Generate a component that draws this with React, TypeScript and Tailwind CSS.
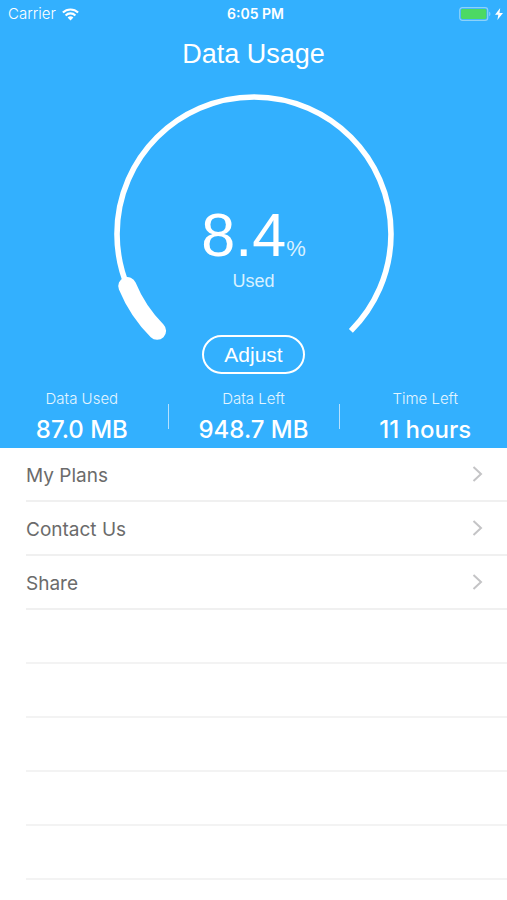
import React from "react";

const CENTER = 140;
const RADIUS = 137;
const START_ANGLE = 135;
const SWEEP = 270;

function pointAt(angle: number) {
  const rad = (angle * Math.PI) / 180;
  return `${CENTER + RADIUS * Math.cos(rad)} ${CENTER + RADIUS * Math.sin(rad)}`;
}

function arc(sweep: number) {
  const large = sweep > 180 ? 1 : 0;
  return `M ${pointAt(START_ANGLE)} A ${RADIUS} ${RADIUS} 0 ${large} 1 ${pointAt(START_ANGLE + sweep)}`;
}

function StatusBar() {
  return (
    <div className="grid h-7 grid-cols-3 items-center pr-1 pl-2 text-sm leading-5">
      <div className="flex items-center gap-1.5">
        <span className="text-[15px] font-light">Carrier</span>
        <svg width="17" height="13" viewBox="0 0 17 13" fill="none" stroke="currentColor" strokeWidth="2.1" aria-hidden="true">
          <path d="M0.9 4.6C5.1 0.4 11.9 0.4 16.1 4.6" />
          <path d="M3.6 7.4C6.4 4.7 10.6 4.7 13.4 7.4" />
          <path d="M8.5 12.4L5.6 9.5C7.2 7.9 9.8 7.9 11.4 9.5Z" fill="currentColor" stroke="none" />
        </svg>
      </div>
      <span className="text-center font-semibold">6:05 PM</span>
      <div className="flex items-center justify-end gap-1">
        <svg width="32" height="14" viewBox="0 0 32 14" aria-hidden="true">
          <rect x="0.7" y="0.7" width="28" height="12.6" rx="2.6" fill="none" stroke="#8cd2fa" strokeWidth="1.2" />
          <rect x="2" y="2" width="25.4" height="10" rx="1.4" fill="#4cd964" />
          <path d="M30.2 4.8C31.8 5.4 31.8 8.6 30.2 9.2Z" fill="#8cd2fa" />
        </svg>
        <svg width="8" height="12" viewBox="0 0 8 12" fill="currentColor" aria-hidden="true">
          <path d="M5.2 0L0 6.8H3.3L2.4 12L8 4.9H4.5Z" />
        </svg>
      </div>
    </div>
  );
}

function Gauge({ percent }: { percent: number }) {
  return (
    <div className="mx-auto grid w-[280px]">
      <svg className="col-start-1 row-start-1" width="280" height="280" viewBox="0 0 280 280" fill="none" stroke="white" aria-hidden="true">
        <path d={arc(SWEEP)} strokeWidth="5.6" />
        <path d={arc((SWEEP * percent) / 100)} strokeWidth="18" strokeLinecap="round" />
      </svg>
      <div className="col-start-1 row-start-1 flex flex-col items-center justify-end font-['Liberation_Sans',Arial,sans-serif]">
        <div className="flex items-baseline leading-10">
          <span className="text-[61px]">{percent}</span>
          <span className="text-[22px] text-[#d9f1ff]">%</span>
        </div>
        <div className="text-lg leading-6 text-[#d9f1ff]">Used</div>
        <button type="button" className="mt-[42px] h-[39px] w-[103px] rounded-full border-2 border-white text-[21px] leading-6">
          Adjust
        </button>
      </div>
    </div>
  );
}

const stats = [
  { label: "Data Used", value: "87.0 MB" },
  { label: "Data Left", value: "948.7 MB" },
  { label: "Time Left", value: "11 hours" },
];

function Stats() {
  return (
    <dl className="-mx-1 mt-[13px] grid grid-cols-3">
      {stats.map((stat, i) => (
        <div key={stat.label} className="relative text-center">
          <dt className="text-[15px] leading-6 font-light text-[#e3f5ff]">{stat.label}</dt>
          <dd className="mt-[3px] text-2xl leading-8 font-medium">{stat.value}</dd>
          {i > 0 && <span className="absolute top-[17px] left-0 h-[25px] w-px bg-[#b5e1ff]" />}
        </div>
      ))}
    </dl>
  );
}

const links = ["My Plans", "Contact Us", "Share"];
const emptyRows = [0, 1, 2, 3, 4];

export default function App() {
  return (
    <div className="h-screen overflow-hidden bg-white font-['Inter','Noto_Sans',sans-serif]">
      <header className="overflow-hidden bg-[#33b0fe] pb-0.5 text-white">
        <StatusBar />
        <h1 className="mt-2 mb-[22px] text-center font-['Liberation_Sans',Arial,sans-serif] text-[27px] leading-9">
          Data Usage
        </h1>
        <Gauge percent={8.4} />
        <Stats />
      </header>
      <nav>
        <ul className="pl-[26px]">
          {links.map((link) => (
            <li key={link} className="h-[54px] border-b-2 border-[#f0f0f0]">
              <a href="#" className="flex h-full items-center justify-between pr-6 text-[19px] leading-6 text-[#6b6b6b]">
                <span className="pt-1">{link}</span>
                <svg width="11" height="16" viewBox="0 0 11 16" fill="none" stroke="#c4c4c6" strokeWidth="2" aria-hidden="true">
                  <path d="M1.5 1L9 8L1.5 15" />
                </svg>
              </a>
            </li>
          ))}
          {emptyRows.map((row) => (
            <li key={row} className="h-[54px] border-b-2 border-[#f3f3f3]" />
          ))}
        </ul>
      </nav>
    </div>
  );
}
